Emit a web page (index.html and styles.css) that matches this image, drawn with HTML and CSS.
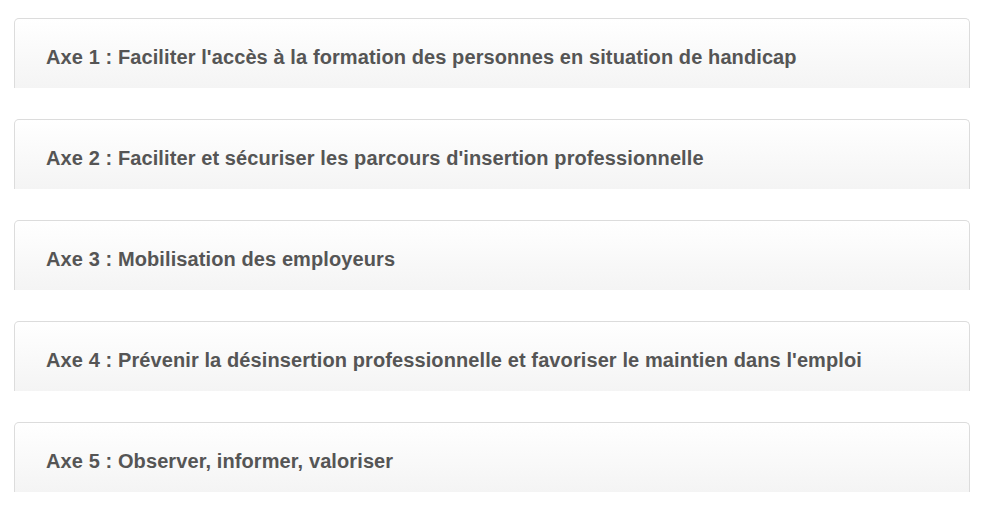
FILE: index.html
```html
<!DOCTYPE html>
<html lang="fr">
<head>
<meta charset="utf-8">
<title>Axes</title>
<link rel="stylesheet" href="styles.css">
</head>
<body>
<div class="list">
  <div class="panel"><h3 class="title">Axe 1 : Faciliter l'accès à la formation des personnes en situation de handicap</h3></div>
  <div class="panel"><h3 class="title">Axe 2 : Faciliter et sécuriser les parcours d'insertion professionnelle</h3></div>
  <div class="panel"><h3 class="title">Axe 3 : Mobilisation des employeurs</h3></div>
  <div class="panel"><h3 class="title">Axe 4 : Prévenir la désinsertion professionnelle et favoriser le maintien dans l'emploi</h3></div>
  <div class="panel"><h3 class="title">Axe 5 : Observer, informer, valoriser</h3></div>
</div>
</body>
</html>
```
FILE: styles.css
```css
html, body {
  margin: 0;
  padding: 0;
  background: #fff;
}
.list {
  display: flex;
  flex-direction: column;
  gap: 31px;
  padding: 18px 18px 0 14px;
}
.panel {
  box-sizing: border-box;
  height: 70px;
  border: 1px solid #dcdcdc;
  border-bottom: none;
  border-radius: 5px 5px 0 0;
  background: linear-gradient(to bottom, #ffffff 0%, #f4f4f4 100%);
  display: flex;
  align-items: center;
  padding: 0 0 0 31px;
}
.title {
  margin: 0;
  font-family: "Liberation Sans", Arial, sans-serif;
  font-weight: bold;
  font-size: 20px;
  letter-spacing: 0.1px;
  color: #555;
  line-height: 1;
  position: relative;
  top: 3px;
}
```
